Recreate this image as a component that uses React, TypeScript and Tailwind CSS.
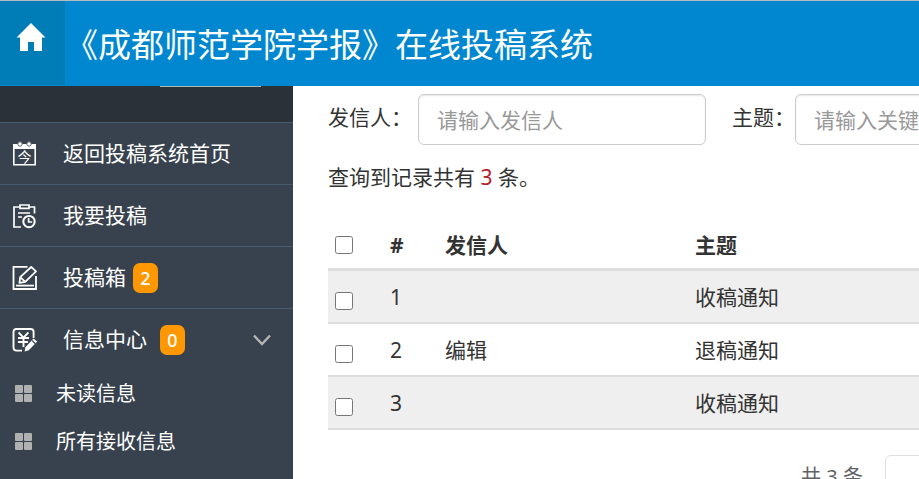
import { useState } from 'react';
import type { ReactNode } from 'react';

type Message = { id: number; sender: string; subject: string };

const messages: Message[] = [
  { id: 1, sender: '', subject: '收稿通知' },
  { id: 2, sender: '编辑', subject: '退稿通知' },
  { id: 3, sender: '', subject: '收稿通知' },
];

const HomeIcon = () => (
  <svg className="w-[30px] h-[30px]" viewBox="0 0 30 30" fill="#fff">
    <path d="M15 1 29.5 15.5H26V29H18V20H12V29H4V15.5H.5Z" />
  </svg>
);

const CalendarIcon = () => (
  <span className="relative block h-[26px] w-[25px]">
    <svg className="h-[26px] w-[25px]" viewBox="0 0 25 26" fill="none" stroke="#fff">
      <path d="M1.8 4V23.8H23.2V4" strokeWidth="1.6" />
      <path d="M1 3H24V8H1Z" fill="#fff" stroke="none" />
      <circle cx="8" cy="3" r="2.2" fill="#fff" stroke="#5c6771" />
      <circle cx="17" cy="3" r="2.2" fill="#fff" stroke="#5c6771" />
    </svg>
    <span className="absolute inset-x-0 bottom-[3px] text-center text-sm leading-[14px]">今</span>
  </span>
);

const ClipboardIcon = () => (
  <svg className="w-[25px] h-[26px]" viewBox="0 0 25 26" fill="none" stroke="#fff" strokeWidth="1.7">
    <path d="M7.5 4H2V24H9M17 4H22.5V10.5" />
    <path d="M8 2H17V5.4H8Z" />
    <path d="M6 10H18M6 14H10" />
    <circle cx="17" cy="18.6" r="5.7" strokeWidth="2" />
    <path d="M16.6 15V19H20.2" />
  </svg>
);

const EditIcon = () => (
  <svg className="w-[26px] h-[26px]" viewBox="0 0 26 26" fill="none" stroke="#fff" strokeWidth="1.8">
    <path d="M15.5 1.8H1.5V24H24V11" />
    <path d="M4 20.6H22" />
    <path d="M19.2 2 24 6.4 13.2 16.8 7.4 17.8 8.2 12.2Z" strokeLinejoin="round" />
    <path d="M8.4 12.4 13 16.6" />
  </svg>
);

const MoneyIcon = () => (
  <svg className="w-[26px] h-[26px]" viewBox="0 0 26 26" fill="none" stroke="#fff" strokeWidth="1.9">
    <path d="M10 23.6H4.4Q1.5 23.6 1.5 20.6V4.8Q1.5 2 4.4 2H18.6Q21.6 2 21.6 4.8V11" />
    <path d="M6.6 5.5 11.5 10.6 16.4 5.5M6 11H17M6 15H16M11.5 10.6V20" />
    <path d="M21.5 11.6 25.2 14.6 16.8 23.2 12.6 24.6 13.4 20.2Z" fill="#fff" stroke="none" />
    <path d="M19.8 13.4 23.4 16.8" stroke="#37424e" strokeWidth="1.2" />
  </svg>
);

const GridIcon = () => (
  <svg className="w-[18px] h-[18px]" viewBox="0 0 18 18" fill="#b0b0b0">
    <rect x="0" y="0" width="8" height="8" rx="1" />
    <rect x="9" y="0" width="8" height="8" rx="1" />
    <rect x="0" y="9" width="8" height="8" rx="1" />
    <rect x="9" y="9" width="8" height="8" rx="1" />
  </svg>
);

const Badge = ({ children }: { children: ReactNode }) => (
  <span className="flex h-[30px] w-[25px] items-center justify-center rounded-[7px] bg-[#ff9800] text-lg font-medium text-white">
    {children}
  </span>
);

function MenuItem({ icon, label, badge, children }: { icon: ReactNode; label: string; badge?: ReactNode; children?: ReactNode }) {
  return (
    <li className="border-t border-[#475c71]">
      <a href="#" className="flex h-[61px] items-center pl-3 pr-[22px] text-[21px] text-white">
        <span className="w-[51px]">{icon}</span>
        <span>{label}</span>
        {badge}
        {children}
      </a>
    </li>
  );
}

const SubItem = ({ label }: { label: string }) => (
  <li>
    <a href="#" className="flex h-12 items-center pl-[15px] text-xl text-white">
      <span className="w-[41px]"><GridIcon /></span>
      {label}
    </a>
  </li>
);

export default function App() {
  const [sender, setSender] = useState('');
  const [subject, setSubject] = useState('');
  const [selected, setSelected] = useState<number[]>([]);

  const allSelected = selected.length === messages.length;
  const toggle = (id: number) =>
    setSelected(s => (s.includes(id) ? s.filter(x => x !== id) : [...s, id]));

  const inputClass =
    'h-[51px] w-72 shrink-0 rounded-md border border-[#ccc] bg-white px-[18px] text-[21px] text-[#555] shadow-[inset_0_1px_2px_rgba(0,0,0,0.1)] placeholder:text-[#999]';

  return (
    <div className="flex h-screen flex-col overflow-hidden bg-white font-['Noto_Sans','Noto_Sans_CJK_SC',sans-serif] text-[#333]">
      <header className="flex h-[86px] shrink-0 border-t border-[#b4bcc0] bg-[#0187d0]">
        <a href="#" aria-label="首页" className="flex h-[84px] w-[65px] shrink-0 justify-center bg-[#007cb7] pr-1 pt-[21px]">
          <HomeIcon />
        </a>
        <h1 className="whitespace-nowrap pt-5 text-[33px] leading-[48px] text-white">《成都师范学院学报》在线投稿系统</h1>
      </header>

      <div className="flex min-h-0 flex-1">
        <aside className="w-[293px] shrink-0 overflow-hidden bg-[#37424e]">
          <div className="h-9 bg-[#2a3138]">
            <div className="ml-40 h-px w-[101px] bg-[#a9b8b0]" />
          </div>
          <ul>
            <MenuItem icon={<CalendarIcon />} label="返回投稿系统首页" />
            <MenuItem icon={<ClipboardIcon />} label="我要投稿" />
            <MenuItem icon={<EditIcon />} label="投稿箱" badge={<span className="ml-[7px]"><Badge>2</Badge></span>} />
            <MenuItem icon={<MoneyIcon />} label="信息中心" badge={<span className="ml-[13px]"><Badge>0</Badge></span>}>
              <svg className="ml-auto h-3 w-[18px]" viewBox="0 0 18 12" fill="none" stroke="#b5b5b5" strokeWidth="2.4">
                <path d="M1 1.5 9 10 17 1.5" />
              </svg>
            </MenuItem>
          </ul>
          <ul>
            <SubItem label="未读信息" />
            <SubItem label="所有接收信息" />
          </ul>
        </aside>

        <main className="min-w-0 flex-1 overflow-hidden pl-[35px] pt-2">
          <div className="min-w-[1180px]">
            <form className="flex items-center text-[21px]">
              <label htmlFor="sender" className="w-[90px] shrink-0 pb-1">发信人：</label>
              <input id="sender" className={inputClass} placeholder="请输入发信人" value={sender} onChange={e => setSender(e.target.value)} />
              <label htmlFor="subject" className="ml-[26px] w-[63px] shrink-0 pb-1">主题：</label>
              <input id="subject" className={inputClass} placeholder="请输入关键字" value={subject} onChange={e => setSubject(e.target.value)} />
            </form>

            <p className="mt-[17px] text-[21px] leading-[30px]">
              查询到记录共有 <span className="text-[#b5222a]">{messages.length}</span> 条。
            </p>

            <table className="mt-[30px] w-full table-fixed border-separate border-spacing-0 text-left text-[21px] leading-[30px]">
              <colgroup>
                <col className="w-[55px]" />
                <col className="w-[55px]" />
                <col className="w-[250px]" />
                <col />
              </colgroup>
              <thead>
                <tr className="h-[49px] *:border-b-3 *:border-[#ddd] *:px-[7px] *:py-0 *:font-bold">
                  <th>
                    <input
                      type="checkbox"
                      aria-label="全选"
                      className="block size-[18px]"
                      checked={allSelected}
                      onChange={() => setSelected(allSelected ? [] : messages.map(m => m.id))}
                    />
                  </th>
                  <th>#</th>
                  <th>发信人</th>
                  <th>主题</th>
                </tr>
              </thead>
              <tbody>
                {messages.map(m => (
                  <tr key={m.id} className="h-[53px] odd:bg-[#efefef] *:border-b-2 *:border-[#ddd] *:px-[7px] *:py-0">
                    <td>
                      <input
                        type="checkbox"
                        aria-label={`选择 ${m.id}`}
                        className="mt-2 block size-[18px]"
                        checked={selected.includes(m.id)}
                        onChange={() => toggle(m.id)}
                      />
                    </td>
                    <td>{m.id}</td>
                    <td>{m.sender}</td>
                    <td>{m.subject}</td>
                  </tr>
                ))}
              </tbody>
            </table>

            <div className="mt-[25px] flex items-center justify-center gap-[22px] text-xl text-[#606266]">
              <span className="pt-0.5">共 {messages.length} 条</span>
              <select aria-label="每页条数" className="h-[42px] w-[150px] appearance-none rounded-md border border-[#dcdfe6] bg-white pl-10">
                <option>10条/页</option>
                <option>20条/页</option>
              </select>
            </div>
          </div>
        </main>
      </div>
    </div>
  );
}
